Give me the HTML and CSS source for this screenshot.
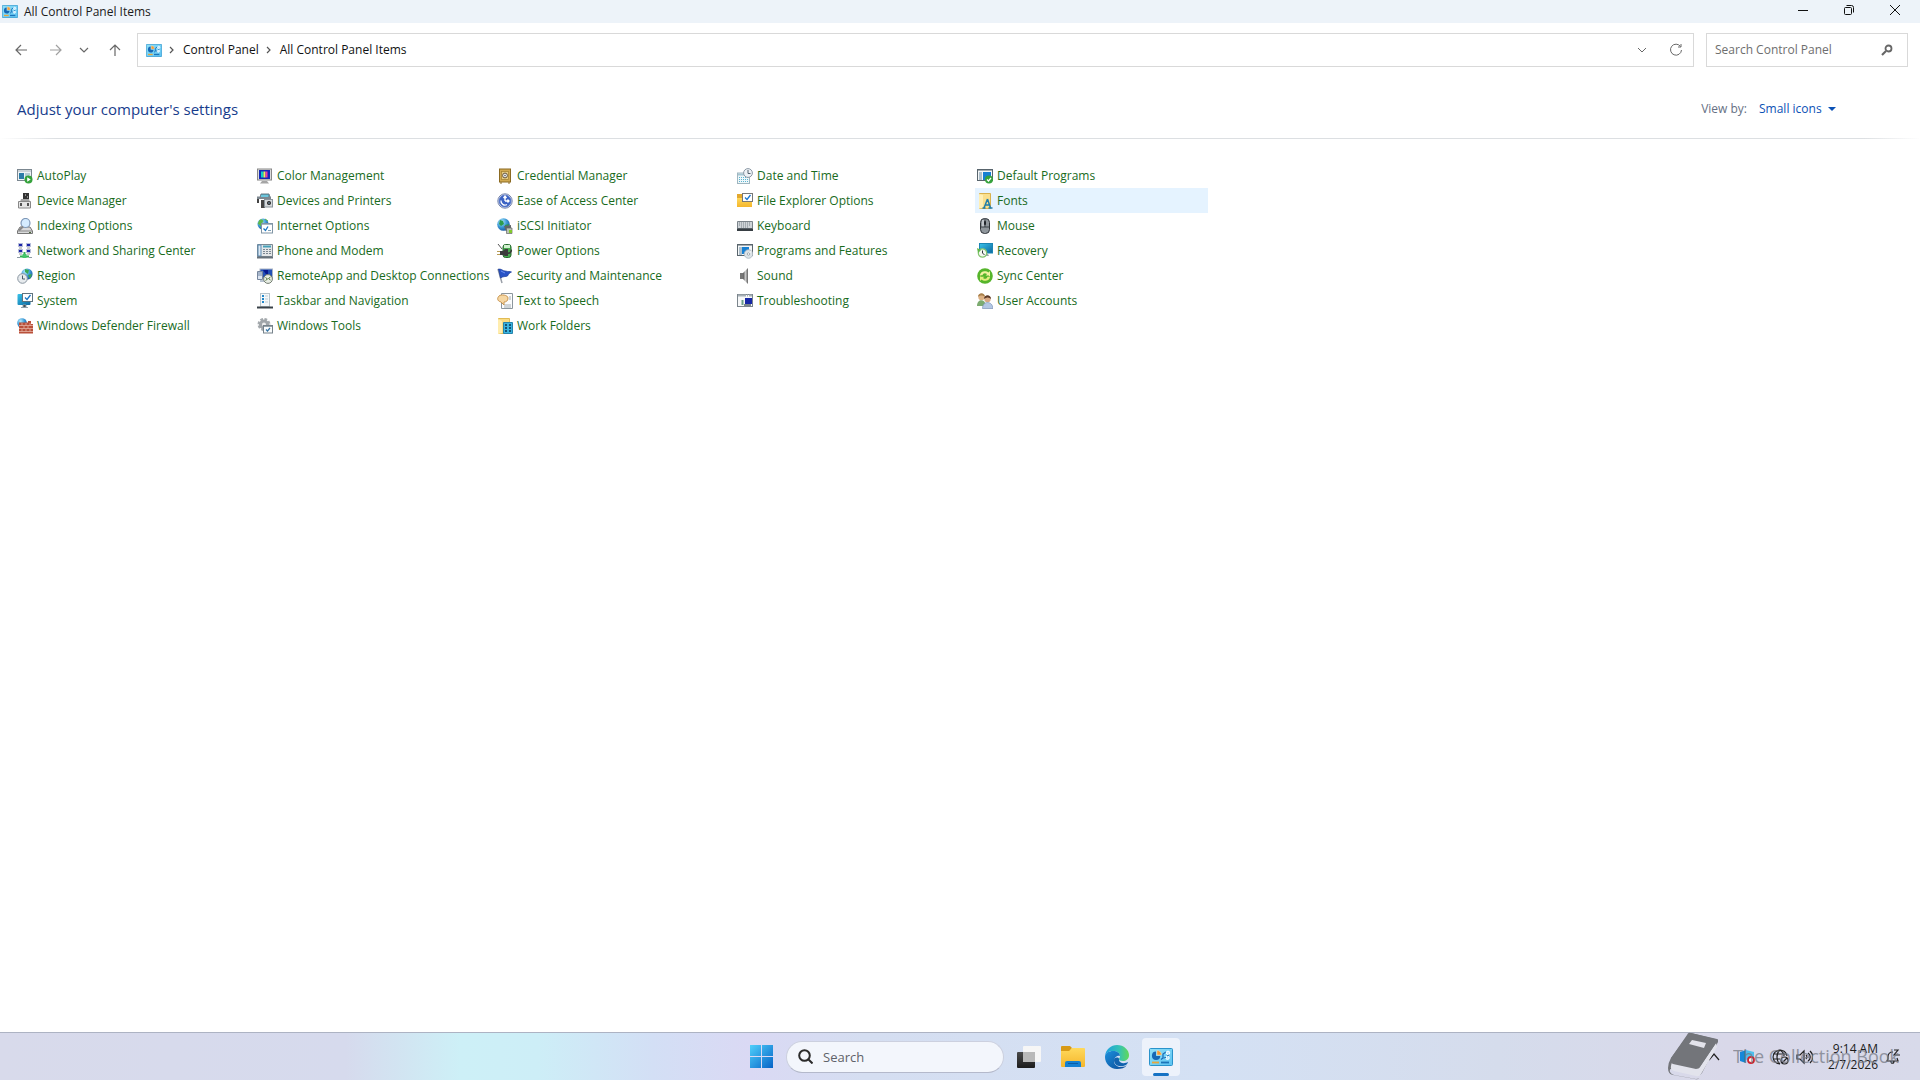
FILE: index.html
```
<!DOCTYPE html>
<html lang="en">
<head>
<meta charset="utf-8">
<title>All Control Panel Items</title>
<link rel="stylesheet" href="styles.css">
</head>
<body>
<svg class="defs" aria-hidden="true">
  <defs>
    <linearGradient id="sky" x1="0" y1="0" x2="1" y2="1"><stop offset="0" stop-color="#8fe0f8"/><stop offset="1" stop-color="#5cc3f2"/></linearGradient>
    <linearGradient id="screen" x1="0" y1="0" x2="1" y2="1"><stop offset="0" stop-color="#38c3ea"/><stop offset="1" stop-color="#0d679f"/></linearGradient>
    <linearGradient id="win" x1="0" y1="0" x2="1" y2="1"><stop offset="0" stop-color="#4fd0fb"/><stop offset="1" stop-color="#0663c7"/></linearGradient>
    <radialGradient id="globe" cx=".35" cy=".3" r=".8"><stop offset="0" stop-color="#b5ecfc"/><stop offset=".5" stop-color="#3d9bd8"/><stop offset="1" stop-color="#144b94"/></radialGradient>
    <linearGradient id="metal" x1="0" y1="0" x2="1" y2="0"><stop offset="0" stop-color="#555"/><stop offset=".5" stop-color="#c9c9c9"/><stop offset="1" stop-color="#666"/></linearGradient>
    <linearGradient id="folder" x1="0" y1="0" x2="0" y2="1"><stop offset="0" stop-color="#ffd95c"/><stop offset="1" stop-color="#f5b62c"/></linearGradient>
    <linearGradient id="edgeTop" x1="0" y1="0" x2="1" y2="0"><stop offset="0" stop-color="#1c9fe0"/><stop offset=".6" stop-color="#35c3b4"/><stop offset="1" stop-color="#62d957"/></linearGradient>
    <linearGradient id="edgeLow" x1="0" y1="0" x2="1" y2="1"><stop offset="0" stop-color="#1b8fdc"/><stop offset="1" stop-color="#0c4a96"/></linearGradient>
    <linearGradient id="dark" x1="0" y1="0" x2="0" y2="1"><stop offset="0" stop-color="#4a4a4a"/><stop offset="1" stop-color="#1c1c1c"/></linearGradient>
    <symbol id="cpanel" viewBox="0 0 24 18" preserveAspectRatio="none">
      <rect x=".5" y=".5" width="23" height="17" rx="1" fill="url(#sky)" stroke="#2a93cb"/>
      <path d="M7 3.500A4.200 4.200 0 1 0 11.300 8H7z" fill="#1668b5"/>
      <path d="M8 2.500A4.500 4.500 0 0 1 12.500 7H8z" fill="#f39a35" stroke="#fbe3bd" stroke-width=".5"/>
      <path d="M12 11.500l2-1.500V6l3-2" fill="none" stroke="#1668b5" stroke-width="1.200"/>
      <circle cx="19" cy="4.800" r="1.700" fill="#bfeaff" stroke="#fff"/><circle cx="18.500" cy="9.800" r="1.700" fill="#bfeaff" stroke="#fff"/>
      <path d="M14.500 10l2.500-.5M20 7l-2 1" stroke="#1668b5"/>
      <path d="M3 14.500h7" stroke="#e7a63c" stroke-width="1.800"/><path d="M12 14.500h8" stroke="#1c74b8" stroke-width="1.800"/>
    </symbol>
  </defs>
</svg>

<header class="titlebar">
  <svg class="cp-small"><use href="#cpanel"/></svg>
  <span class="window-title">All Control Panel Items</span>
  <div class="caption-buttons">
    <button aria-label="Minimize"><svg width="12" height="12"><path d="M1 6.500h10"/></svg></button>
    <button aria-label="Restore"><svg width="12" height="12"><rect x="1.500" y="3.500" width="7" height="7" rx="1"/><path d="M3.500 1.500h5a2 2 0 0 1 2 2v5"/></svg></button>
    <button aria-label="Close"><svg width="12" height="12"><path d="M1 1l10 10M11 1L1 11"/></svg></button>
  </div>
</header>

<div class="toolbar">
  <div class="history">
    <button aria-label="Back"><svg width="14" height="14"><path d="M13 7H2M7 2L2 7l5 5"/></svg></button>
    <button class="faded" aria-label="Forward"><svg width="14" height="14"><path d="M1 7h11M7 2l5 5-5 5"/></svg></button>
    <button aria-label="Recent locations"><svg width="10" height="14"><path d="M1 5l4 4 4-4"/></svg></button>
    <button aria-label="Up"><svg width="14" height="14"><path d="M7 13V2M2 7l5-5 5 5"/></svg></button>
  </div>
  <nav class="address" aria-label="Address">
    <svg class="cp-small"><use href="#cpanel"/></svg>
    <svg class="crumb" width="6" height="8"><path d="M1 1l3 3-3 3"/></svg>
    <a href="#">Control Panel</a>
    <svg class="crumb" width="6" height="8"><path d="M1 1l3 3-3 3"/></svg>
    <a href="#">All Control Panel Items</a>
    <div class="address-actions">
      <button aria-label="Previous locations"><svg width="10" height="12"><path d="M1 4l4 4 4-4"/></svg></button>
      <button aria-label="Refresh"><svg width="14" height="14"><path d="M11.500 3.500A5.500 5.500 0 1 0 12.500 7M12 1v3H9"/></svg></button>
    </div>
  </nav>
  <form class="search">
    <input type="text" placeholder="Search Control Panel" aria-label="Search Control Panel">
    <button type="button" aria-label="Search"><svg width="12" height="12"><circle cx="7.500" cy="4.500" r="3" stroke-width="1.800"/><path d="M5 7l-4 4" stroke-width="2.200"/></svg></button>
  </form>
</div>

<main>
  <div class="heading">
    <h1>Adjust your computer's settings</h1>
    <div class="view">
      <label for="view">View by:</label>
      <select id="view"><option>Small icons</option></select>
      <svg width="8" height="4" aria-hidden="true"><path d="M0 0h8L4 4z" fill="#0b51b5"/></svg>
    </div>
  </div>
  <ul class="items">
    <li><a href="#"><svg viewBox="0 0 16 16"><rect x=".5" y="1.500" width="14" height="11" fill="#eef3f6" stroke="#7b8790"/><path d="M1 3h13" stroke="#aab4bc"/><rect x="2" y="5" width="5" height="6" fill="#2b7ca8"/><path d="M8 6h5M8 8h4" stroke="#7fa6b8"/><circle cx="11.500" cy="11.500" r="4" fill="#35a23c"/><path d="M10.200 9.300v4.400l3.500-2.200z" fill="#fff"/></svg>AutoPlay</a></li>
    <li><a href="#"><svg viewBox="0 0 16 16"><rect x=".5" y="1" width="14" height="11" fill="#dcdcdc" stroke="#888"/><rect x="2" y="2" width="11" height="9" fill="#1429b8"/><rect x="4" y="3.500" width="2.500" height="6" fill="#12d0c0"/><rect x="6.500" y="3.500" width="2" height="6" fill="#f2ef5c"/><rect x="8.500" y="3.500" width="2" height="6" fill="#ee3aa8"/><path d="M5 13h5l2 2.500H3z" fill="#a5a5a5"/></svg>Color Management</a></li>
    <li><a href="#"><svg viewBox="0 0 16 16"><rect x="2.500" y="1" width="11" height="13" fill="#d1a950" stroke="#8b6a22"/><rect x="4.500" y="3.500" width="7" height="8" fill="#e5cb84" stroke="#a88434" stroke-width=".8"/><circle cx="8" cy="7.500" r="2.400" fill="#eee" stroke="#66543a"/><circle cx="8" cy="7.500" r=".8" fill="#555"/><path d="M3 15h2M11 15h2" stroke="#8b6a22"/></svg>Credential Manager</a></li>
    <li><a href="#"><svg viewBox="0 0 16 16"><rect x=".5" y="5" width="12" height="10.500" fill="#eef7fa" stroke="#9fb6c0"/><path d="M1 6.500h11" stroke="#a7c5d1" stroke-width="2"/><path d="M2 9.500h9M2 11.500h9M2 13.500h9" stroke="#5cb4d0" stroke-dasharray="1 1"/><circle cx="11" cy="5" r="4.400" fill="#edf1f5" stroke="#8b98a4"/><path d="M11 2v3.500h2.500" fill="none" stroke="#52606c"/></svg>Date and Time</a></li>
    <li><a href="#"><svg viewBox="0 0 16 16"><rect x=".5" y="1.500" width="15" height="11" fill="#f5f7f8" stroke="#59656d"/><path d="M1 2h14" stroke="#59656d"/><path d="M2 5h3M2 7h3M2 9h3M2 11h3" stroke="#6a8aa0"/><rect x="6" y="4" width="8" height="8" fill="#167fd2"/><circle cx="12" cy="11.500" r="4" fill="#35a23c"/><path d="M10 11.500l1.500 1.500 2.500-3" fill="none" stroke="#fff" stroke-width="1.200"/></svg>Default Programs</a></li>

    <li><a href="#"><svg viewBox="0 0 16 16"><rect x="6" y="0" width="6" height="7" fill="#333"/><path d="M8 2h1M10 4h1" stroke="#ddd"/><path d="M4 6h8l1 3H3z" fill="#a5a5a5"/><path d="M1.500 8.500h12v6.500h-12z" fill="#e5e5e5" stroke="#888"/><path d="M4 10v3M11 10v3" stroke="#222" stroke-width="1.500"/></svg>Device Manager</a></li>
    <li><a href="#"><svg viewBox="0 0 16 16"><path d="M4 1h8l1 4H3z" fill="#4aa9c3" stroke="#6d7a82"/><path d="M0 3.500h14V6H0z" fill="#7d878f"/><path d="M4 2h7v2H4z" fill="#6cc6dc"/><path d="M0 6h2v4H0zM4 7h4v8H4z" fill="#444"/><rect x="7.500" y="6.500" width="8" height="7.500" fill="#d5d9dc" stroke="#8a949b"/><circle cx="12" cy="10" r="2" fill="#222"/><circle cx="12" cy="10" r=".8" fill="#8db1cf"/></svg>Devices and Printers</a></li>
    <li><a href="#"><svg viewBox="0 0 16 16"><circle cx="8" cy="8" r="7.200" fill="#dfe4f2" stroke="#7685ac"/><circle cx="8" cy="8" r="5.900" fill="#3c63c4" stroke="#5577c9"/><path d="M8 3.500V8M6.500 5L8 3l1.500 2M8 8h4M10.500 6.500L12 8l-1.500 1.500M4 7.500a4 4 0 0 0 6 4" fill="none" stroke="#fff" stroke-width="1.300"/></svg>Ease of Access Center</a></li>
    <li><a href="#"><svg viewBox="0 0 16 16"><path d="M0 1h5l1 2h9v11H0z" fill="#e3a82e"/><path d="M0 5h15v9H0z" fill="url(#folder)"/><rect x="5.500" y=".5" width="10" height="8" fill="#fff" stroke="#777"/><path d="M8 4.500l2 2 3.500-4.500" fill="none" stroke="#1976d2" stroke-width="1.300"/></svg>File Explorer Options</a></li>
    <li class="hovered"><a href="#"><svg viewBox="0 0 16 16"><path d="M2.500.5h11v15h-11z" fill="#f9df8d" stroke="#d9b14d"/><path d="M2 1l4 1v13l-4 .5z" fill="#ffefb5"/><path d="M5.500 15h3M11.500 15h4M7 15l3.500-9M10.500 6l3 9M8.500 12H12" fill="none" stroke="#217eab" stroke-width="1.500"/></svg>Fonts</a></li>

    <li><a href="#"><svg viewBox="0 0 16 16"><path d="M3 9h10l2.500 4v2.500H.5V13z" fill="#d9dadb" stroke="#777"/><path d="M1 13h14" stroke="#888"/><path d="M12 14.500h2" stroke="#4f6c3e"/><circle cx="8.500" cy="5" r="4.500" fill="#d5ecff" stroke="#7e98b8" stroke-width="1.200"/><path d="M6 8.500l-4 4" stroke="#888" stroke-width="2"/></svg>Indexing Options</a></li>
    <li><a href="#"><svg viewBox="0 0 16 16"><circle cx="6" cy="6" r="5.500" fill="url(#globe)"/><path d="M2 3c2-2 4-1 4 0S4 5 4 7 2 6 1 5M8 1l3 2" stroke="#5fb84b" fill="#5fb84b"/><rect x="4.500" y="5.500" width="11" height="9.500" fill="#fff" stroke="#8095a5"/><path d="M5 6.500h10" stroke="#a9bac6"/><path d="M6.500 10.500l2 2 2.500-4" fill="none" stroke="#1976c4" stroke-width="1.300"/><path d="M11 12.500h3" stroke="#7fa0b6"/></svg>Internet Options</a></li>
    <li><a href="#"><svg viewBox="0 0 16 16"><circle cx="6.500" cy="6.500" r="6.300" fill="url(#globe)"/><path d="M3 2l3 1 1 3-3 2-2-2zM8 7l4-1-1 4-3 1z" fill="#2c9b4d"/><path d="M7 8l7-1v6H9z" fill="#62666a"/><path d="M9.500 10h5.500v5.500h-5.500z" fill="#b9c4b4" stroke="#666" stroke-width=".7"/><path d="M12 12h3v3h-3z" fill="#82c92d"/></svg>iSCSI Initiator</a></li>
    <li><a href="#"><svg viewBox="0 0 16 16"><path d="M.5 3.500h15v7H.5z" fill="#cfd4d8" stroke="#7b848b"/><path d="M2 5h12M2 7h12M4 9h8" stroke="#7b848b" stroke-dasharray="1 1"/><path d="M0 10.500h16V13H0z" fill="#373e43"/></svg>Keyboard</a></li>
    <li><a href="#"><svg viewBox="0 0 16 16"><rect x="3.500" y=".5" width="9" height="15" rx="4" fill="#8f969c" stroke="#30353a"/><rect x="5" y="2" width="2" height="7" fill="#bfc4ca"/><path d="M8 1v8M4 9h8" stroke="#3d4249"/><rect x="7" y="3" width="2" height="4" rx="1" fill="#20242a"/></svg>Mouse</a></li>

    <li><a href="#"><svg viewBox="0 0 16 16"><path d="M1.500.5h4v3h-4zM9.500.5h4v3h-4zM1.500 6.500h4v3h-4zM9.500 6.500h4v3h-4z" fill="#1c24a8" stroke="#b5bdd8"/><path d="M2 5h3M10 5h3M2 11h3M10 11h3" stroke="#999"/><path d="M7.500 9v5M3 13.500h9" stroke="#32ad55" stroke-width="2"/><path d="M0 14.500h3M12 14.500h3" stroke="#8c9aa2"/><path d="M5.500 11h4v4h-4z" fill="#42c46a"/></svg>Network and Sharing Center</a></li>
    <li><a href="#"><svg viewBox="0 0 16 16"><path d="M.5 1.500h15v12H.5z" fill="#e3e6e8" stroke="#7c8993"/><rect x="1" y="2" width="3" height="11" fill="#dce8f3" stroke="#5a89b0"/><path d="M6 3.500h8" stroke="#46a1b9" stroke-width="2"/><path d="M6 6.500h8M6 8.500h8M6 10.500h8" stroke="#7a8792" stroke-dasharray="2 1"/><path d="M0 14.500h16" stroke="#66717a" stroke-width="2"/></svg>Phone and Modem</a></li>
    <li><a href="#"><svg viewBox="0 0 16 16"><path d="M1 1l4 5" stroke="#555"/><rect x="6" y="1.500" width="8" height="13" rx="2.500" fill="#49ab50" stroke="#256a2c"/><path d="M7 2h6v3H7z" fill="#d1f0cf"/><path d="M3 8h3l2-2h3v7H8l-2-1H3z" fill="#3a3a3a"/><path d="M0 8.500h3M0 11.500h3" stroke="#b89c56"/><path d="M11 10c3 1 3-3 4-3" fill="none" stroke="#3a3a3a" stroke-width="1.500"/></svg>Power Options</a></li>
    <li><a href="#"><svg viewBox="0 0 16 16"><rect x=".5" y="1.500" width="15" height="11" fill="#f5f7f8" stroke="#59656d"/><path d="M1 2h14" stroke="#59656d"/><path d="M2 5h3M2 7h3M2 9h3M2 11h3" stroke="#6a8aa0"/><rect x="5" y="4" width="7" height="7" fill="#167fd2"/><circle cx="11.500" cy="11" r="4.300" fill="#dce3e7" stroke="#a7b4bc" stroke-width=".8"/><path d="M11.500 11l3-3" stroke="#fff"/><circle cx="11.500" cy="11" r="1.200" fill="#fff" stroke="#84929b" stroke-width=".7"/></svg>Programs and Features</a></li>
    <li><a href="#"><svg viewBox="0 0 16 16"><rect x="2.500" y=".5" width="13" height="9.500" fill="url(#screen)" stroke="#1b86b4"/><path d="M8 11h3l1 2H7z" fill="#9ba6ad"/><circle cx="5.500" cy="10" r="4.200" fill="#f3f8ef" stroke="#82c46e" stroke-width="1.200"/><path d="M0 5l1 5 3-3z" fill="#62b74a"/><path d="M5.500 7.500v2.500l2 2" fill="none" stroke="#30363a"/></svg>Recovery</a></li>

    <li><a href="#"><svg viewBox="0 0 16 16"><circle cx="10" cy="6" r="5.600" fill="url(#globe)"/><path d="M8 1l4 1-1 4-3-2zM11 7l4-1-2 5z" fill="#39a853"/><circle cx="5.500" cy="10.500" r="4.800" fill="#e7ebee" stroke="#8995a0"/><path d="M5.500 7.500v3.500H8" fill="none" stroke="#4c5a66"/></svg>Region</a></li>
    <li><a href="#"><svg viewBox="0 0 16 16"><rect x="3" y="1" width="12.500" height="9" fill="#2350b6" stroke="#a9b3c3"/><path d="M6 2h5v7z" fill="#08188e"/><path d="M.5 3.500h5v8h-5z" fill="#dce5f2" stroke="#76869d"/><path d="M1 5h4M1 7h4M3 13h5" stroke="#7186a4"/><circle cx="11" cy="11" r="4.400" fill="#e9eee5" stroke="#737d71"/><path d="M8.500 9.500l2 1.500-2 1.500M13.500 9l-2 1.500 2 1.500" fill="none" stroke="#52753e"/></svg>RemoteApp and Desktop Connections</a></li>
    <li><a href="#"><svg viewBox="0 0 16 16"><path d="M1 1l4 14" stroke="#9a9fa8" stroke-width="1.500"/><path d="M1.500 1c4 0 4 2 7 2 3 1 4 0 6 1-2 1-3 2-4 4-2 1-4 0-7 2z" fill="#2953c7" stroke="#1c3e99" stroke-width=".7"/><path d="M4 3l4 2" stroke="#6e91ee"/></svg>Security and Maintenance</a></li>
    <li><a href="#"><svg viewBox="0 0 16 16"><path d="M3 5h4v6H3z" fill="#777"/><path d="M6 5l5-5v16l-5-5z" fill="url(#metal)"/><path d="M10.500 1v14" stroke="#777"/></svg>Sound</a></li>
    <li><a href="#"><svg viewBox="0 0 16 16"><circle cx="8" cy="8" r="7.800" fill="#56b52b"/><path d="M3 7.500C3 3 9 2 11.500 4.500L13 3v5H8.500L10 6C8 4.500 6 5 5.500 7.500z" fill="#f4f0a0"/><path d="M13 8.500C13 13 7 14 4.500 11.500L3 13V8.500h4.500L6 10c2 1.500 4 1 4.500-1.500z" fill="#e5ed7e"/><path d="M4 8h8" stroke="#56b52b"/></svg>Sync Center</a></li>

    <li><a href="#"><svg viewBox="0 0 16 16"><rect x=".5" y="1" width="13" height="11" rx="1" fill="url(#screen)"/><rect x="5.500" y=".5" width="10" height="8" fill="#fff" stroke="#5f737e"/><path d="M8 4.500l2 2 3.500-4.500" fill="none" stroke="#1976c4" stroke-width="1.300"/><path d="M6 12h3v2H6zM4 14.500h7" stroke="#8fa0aa"/></svg>System</a></li>
    <li><a href="#"><svg viewBox="0 0 16 16"><rect x="3.500" y=".5" width="9" height="13" fill="#f4f8fa" stroke="#b8c4ca"/><path d="M5 3h2M5 6h2M5 9h2" stroke="#2387c9" stroke-width="2"/><path d="M8 3h3M8 6h3M8 9h3" stroke="#bfccd3"/><path d="M0 14.500h16" stroke="#384047" stroke-width="2"/></svg>Taskbar and Navigation</a></li>
    <li><a href="#"><svg viewBox="0 0 16 16"><path d="M4.500.5h11v15h-11z" fill="#fbfcfd" stroke="#8c969d"/><path d="M7 12h7M7 14h7M12 4h2M12 6h2" stroke="#a4adb2"/><path d="M2 3c2-2 9-1 9 2 0 3-2 4-4 4v3L4 9C0 8 0 5 2 3z" fill="#f6d7a3" stroke="#c89550"/></svg>Text to Speech</a></li>
    <li><a href="#"><svg viewBox="0 0 16 16"><rect x=".5" y="1.500" width="15" height="12" fill="#f7f8f9" stroke="#7b858c"/><path d="M1 2.500h14" stroke="#a7b0b6" stroke-width="2" stroke-dasharray="8 1 1 1"/><rect x="8" y="5" width="7" height="6" fill="#1727a6"/><path d="M4.500 7h2v5h-2z" fill="#6b9f86"/><path d="M7 12h7" stroke="#7b858c" stroke-width="2"/></svg>Troubleshooting</a></li>
    <li><a href="#"><svg viewBox="0 0 16 16"><circle cx="4.500" cy="4" r="3.200" fill="#dcb184"/><path d="M1 4c0-5 7-5 7 0-2-2-5-2-7 0z" fill="#a9804b"/><path d="M0 13c0-7 8-8 9 0z" fill="#7cab70"/><circle cx="10.500" cy="6" r="3.200" fill="#d9a884"/><path d="M7 6c0-5 7-5 7 0-2-2-4-2-7 0z" fill="#5b3927"/><path d="M5.500 15.500c0-8 10-8 10.500 0z" fill="#b3c7e4" stroke="#7d94b7" stroke-width=".7"/></svg>User Accounts</a></li>

    <li><a href="#"><svg viewBox="0 0 16 16"><circle cx="5" cy="5" r="4.800" fill="url(#globe)"/><path d="M2 4.500h9V3h3v3h2v9.500H2z" fill="#b9503a"/><path d="M2 7.500h14M2 10.500h14M2 13.500h14M5 5v2.500M9 5v2.500M13 5v2.500M7 8v2.500M11 8v2.500M5 11v2.500M9 11v2.500M13 11v2.500" stroke="#e5b3a3" stroke-width=".8"/></svg>Windows Defender Firewall</a></li>
    <li><a href="#"><svg viewBox="0 0 16 16"><circle cx="7" cy="6.500" r="5" fill="none" stroke="#a5aaae" stroke-width="3" stroke-dasharray="2.500 1.400"/><circle cx="7" cy="6.500" r="3.500" fill="#eee" stroke="#a0a5a9" stroke-width="3"/><rect x="6.500" y="7.500" width="9" height="7.500" fill="#f9fbfc" stroke="#76828b"/><path d="M7 8.500h8" stroke="#98a3aa"/><path d="M9 11.500l1.500 1.500 2.500-3" fill="none" stroke="#3675a5" stroke-width="1.200"/></svg>Windows Tools</a></li>
    <li><a href="#"><svg viewBox="0 0 16 16"><path d="M1.500.5h11v15h-11z" fill="#f9dc83" stroke="#e1bb55"/><path d="M1 1l4 2v12l-4 1z" fill="#ffedaf"/><path d="M6.500 4.500h9v11h-9z" fill="#39b3df" stroke="#2684ad"/><path d="M8 7h2M12 7h2M8 10h2M12 10h2M8 13h2M12 13h2" stroke="#125477" stroke-width="2"/></svg>Work Folders</a></li>
  </ul>
</main>

<footer class="taskbar">
  <div class="pinned">
    <button aria-label="Start"><svg width="23" height="23"><path d="M0 0h11v11H0zM12 0h11v11H12zM0 12h11v11H0zM12 12h11v11H12z" fill="url(#win)"/></svg></button>
    <label class="task-search"><svg width="15" height="15"><circle cx="6.500" cy="6.500" r="5.300"/><path d="M10.500 10.500l4 4"/></svg><input type="text" placeholder="Search" aria-label="Search"></label>
    <button aria-label="Task View"><svg width="24" height="24"><rect x="0" y="7" width="18" height="16" rx="1" fill="url(#dark)"/><rect x="6" y="1" width="18" height="16" rx="1" fill="#f6f6f6"/><path d="M6 7h12v10H7a1 1 0 0 1-1-1z" fill="#b9b9b9"/></svg></button>
    <button aria-label="File Explorer"><svg width="24" height="24"><path d="M0 2a1 1 0 0 1 1-1h8l2 2-2 3H0z" fill="#d89a16"/><path d="M0 6h8l3-3h12a1 1 0 0 1 1 1v17a1 1 0 0 1-1 1H1a1 1 0 0 1-1-1z" fill="url(#folder)"/><path d="M4 22v-4a2 2 0 0 1 2-2h12a2 2 0 0 1 2 2v4z" fill="#1480d2"/><path d="M7 18.500h10" stroke="#0a5ca5"/></svg></button>
    <button aria-label="Microsoft Edge"><svg width="24" height="24"><path d="M0 11C1 4 6 0 12 0c7 0 12 5 12 10 0 4-3 6-6 6-3 0-4-1-4-2s1-1 1-3c0-3-3-5-7-5-4 0-7 2-8 5z" fill="url(#edgeTop)"/><path d="M0 12c0-4 4-6 8-6 4 0 7 2 7 5-1-1-6 0-6 5 0 4 4 6 7 6 3 0 5-1 6-2-2 3-6 4-10 4C5 24 0 18 0 12z" fill="url(#edgeLow)"/><path d="M9 15c0 5 5 8 12 5 1-1 2-2 2-3-2 1-5 2-8 0-1-1-1-2-1-3 0-2-5-2-5 1z" fill="#1263ae"/></svg></button>
    <button class="active" aria-label="Control Panel"><svg class="cp-large"><use href="#cpanel"/></svg></button>
  </div>
  <div class="tray">
    <button aria-label="Show hidden icons"><svg width="12" height="16"><path d="M1 11l5-6 5 6"/></svg></button>
    <button class="first-status" aria-label="Security status"><svg width="18" height="16"><path d="M1 3l6-2v13l-6-2z" fill="#1687da" stroke="none"/><path d="M7 1l8 2v5l-8 3z" fill="#4bc0ed" stroke="none"/><circle cx="12" cy="11" r="3" fill="#fff" stroke="#d02530" stroke-width="1.800"/></svg></button>
    <button aria-label="Network"><svg width="17" height="16"><path d="M15 7A7 7 0 1 0 8 15M1 5h13M1 10h7M8 1C4 4 4 12 8 15M8 1c3 2 4 4 4 6"/><circle cx="12.500" cy="11.500" r="3.500"/><path d="M10 14l5-5"/></svg></button>
    <button aria-label="Volume"><svg width="17" height="16"><path d="M1 6h3l4-4v12l-4-4H1zM10 6c1 1 1 3 0 4M12 4c3 2 3 6 0 8M14 2c4 4 4 8 0 12"/></svg></button>
    <time datetime="2026-02-07T09:14">9:14 AM<br>2/7/2026</time>
    <button aria-label="Notifications"><svg width="16" height="16"><path d="M8 3C5 3 3 5 3 8v2l-1 2h11l-1-3M6 12c0 3 3 3 3 0M9 1h4L9 6h4M12 6h3"/></svg></button>
  </div>
  <div class="watermark">
    <svg width="50" height="48"><path d="M23 1l26 6a2 2 0 0 1 1 3L34 41a4 4 0 0 1-4 2L5 37q-4-1-3 3 1 2 4 3l22 4q2 0 3-1l18-28-18 28q-1 2-4 1L5 43Q0 42 0 36q0-5 3-10L19 3q1-3 4-2z" fill="#73757a"/><path d="M5 30l26 6 17-25 1 4-16 27q-2 3-5 2L6 39q-4-1-3-5 0-3 2-4z" fill="#e2e3ec"/><path d="M3 26L20 3q1-2 3-2l24 6q3 1 1 4L32 35q-1 2-4 2L5 32q-3-1-2-6z" fill="#73757a"/><path d="M24 8l14 3-2 5-15-4z" fill="#e3e3eb"/></svg>
    <span>The Collection Book</span>
  </div>
</footer>
</body>
</html>
```
FILE: styles.css
```
* { box-sizing: border-box; }
body {
  margin: 0;
  min-height: 100vh;
  display: flex;
  flex-direction: column;
  background: #fff;
  color: #1b1b1b;
  font: 12px/16px "Open Sans", "Noto Sans", sans-serif;
}
button {
  display: flex;
  align-items: center;
  justify-content: center;
  padding: 0;
  border: 0;
  background: none;
}
a { color: inherit; text-decoration: none; }
svg { display: block; flex: none; }
input, select { font: inherit; border: 0; padding: 0; background: none; outline: 0; }
.defs { position: absolute; width: 0; height: 0; }
.cp-small { width: 16px; height: 13px; }
.cp-large { width: 24px; height: 18px; }

.titlebar {
  display: flex;
  align-items: center;
  height: 23px;
  padding-left: 2px;
  gap: 6px;
  background: #edf3f9;
}
.caption-buttons { display: flex; margin-left: auto; height: 20px; margin-bottom: 3px; padding-right: 2px; }
.caption-buttons button { width: 46px; }
.caption-buttons svg { fill: none; stroke: #111; stroke-width: 1; }

.toolbar { display: flex; gap: 12px; padding: 10px 12px 0; }
.history { display: flex; width: 113px; align-items: center; justify-content: space-between; padding: 0 3px 0 2px; }
.history button:nth-child(2) { margin: 0 -2px 0 2px; }
.history svg, .address-actions svg { fill: none; stroke: #686868; stroke-width: 1; }
.history svg { stroke-width: 1.2; }
.history .faded svg { stroke: #a0a0a0; }
.address {
  flex: 1;
  display: flex;
  align-items: center;
  height: 34px;
  padding: 0 10px 0 8px;
  border: 1px solid #d9d9d9;
}
.address a { color: #111; }
.crumb { margin: 0 8px 0 7px; fill: none; stroke: #555; stroke-width: 1.2; }
.address-actions { display: flex; align-items: center; gap: 22px; margin-left: auto; }
.search { display: flex; align-items: center; width: 202px; height: 34px; padding: 0 14px 0 8px; border: 1px solid #d9d9d9; }
.search input { flex: 1; min-width: 0; }
.search input::placeholder { color: #6e6e6e; opacity: 1; }
.search svg { fill: none; stroke: #666; }

main { flex: 1; }
.heading {
  display: flex;
  align-items: center;
  justify-content: space-between;
  height: 72px;
  padding: 12px 84px 0 17px;
  margin-bottom: 24px;
  border-bottom: 1px solid;
  border-image: linear-gradient(90deg, #fff, #dcdfe2 3%, #dcdfe2 97%, #fff) 1;
}
h1 { margin: 0; color: #173c8c; font-size: 15px; line-height: 24px; font-weight: 400; }
.view { display: flex; align-items: center; color: #667084; }
.view select { appearance: none; margin: 0 6px 0 12px; color: #0b51b5; }

.items {
  display: grid;
  grid-template-columns: repeat(5, 233px);
  grid-auto-rows: 25px;
  column-gap: 7px;
  margin: 0;
  padding: 0 0 0 15px;
  list-style: none;
}
.items a { display: flex; align-items: center; gap: 4px; height: 25px; padding-left: 2px; color: #196b1d; white-space: nowrap; }
.items svg { width: 16px; height: 16px; }
.items .hovered { background: #e5f3ff; }

.taskbar {
  position: relative;
  display: grid;
  grid-template-columns: 1fr auto 1fr;
  align-items: center;
  height: 48px;
  border-top: 1px solid #adb3c3;
  background: linear-gradient(90deg, #d8daeb 0%, #d6daed 18%, #cdf0f7 24%, #cdeef7 28%, #d3dff5 34%, #dad9f4 39%, #d5def1 45%, #d4e1f4 63%, #d5dcec 78%, #d9d8e9 90%, #d8daea 100%);
}
.pinned { grid-column: 2; display: flex; align-items: center; gap: 6px; padding-left: 2px; }
.pinned button { width: 38px; height: 38px; }
.pinned .active { position: relative; border-radius: 4px; background: #edf2fb; }
.pinned .active::after { content: ""; position: absolute; bottom: 0; width: 16px; height: 3px; border-radius: 2px; background: #1672c4; }
.task-search {
  display: flex;
  align-items: center;
  gap: 10px;
  width: 218px;
  height: 32px;
  padding: 0 11px;
  border: 1px solid #ccd0df;
  border-bottom-color: #b4b9cb;
  border-radius: 16px;
  background: #f3f6fc;
}
.task-search svg { fill: none; stroke: #2b2b2b; stroke-width: 2; }
.task-search input { width: 150px; font-size: 13px; }
.task-search input::placeholder { color: #5f6269; opacity: 1; }
.tray { display: flex; align-items: center; justify-self: end; gap: 7px; padding-right: 19px; }
.tray svg { fill: none; stroke: #222; stroke-width: 1.2; }
.tray .first-status { margin: 0 8px 0 12px; }
.tray time { margin-left: 8px; text-align: right; }
.watermark { position: absolute; right: 21px; bottom: 0; display: flex; align-items: center; gap: 15px; pointer-events: none; }
.watermark span { color: #777b86; font-size: 18px; line-height: 24px; opacity: .75; white-space: nowrap; }
```
